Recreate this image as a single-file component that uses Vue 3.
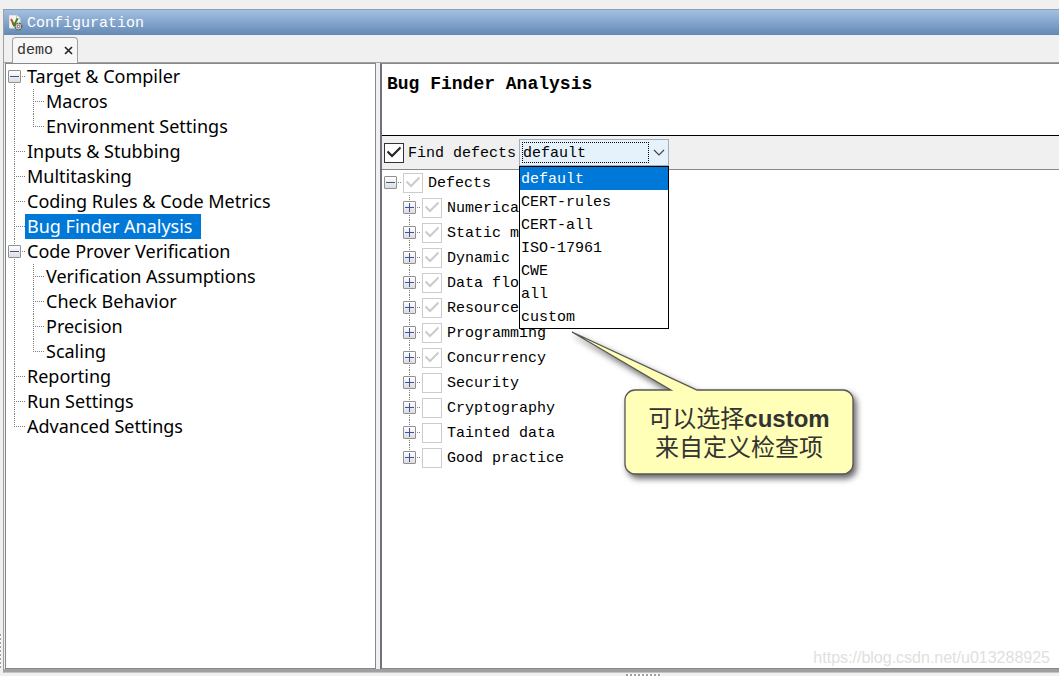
<script setup>
import { ref } from 'vue'

const sections = ref([
  { name: 'Target & Compiler', open: true, children: ['Macros', 'Environment Settings'] },
  { name: 'Inputs & Stubbing' },
  { name: 'Multitasking' },
  { name: 'Coding Rules & Code Metrics' },
  { name: 'Bug Finder Analysis' },
  {
    name: 'Code Prover Verification',
    open: true,
    children: ['Verification Assumptions', 'Check Behavior', 'Precision', 'Scaling'],
  },
  { name: 'Reporting' },
  { name: 'Run Settings' },
  { name: 'Advanced Settings' },
])
const current = ref('Bug Finder Analysis')

const defectsOpen = ref(true)
const defects = ref([
  { name: 'Numerical', on: true },
  { name: 'Static memory', on: true },
  { name: 'Dynamic memory', on: true },
  { name: 'Data flow', on: true },
  { name: 'Resource management', on: true },
  { name: 'Programming', on: true },
  { name: 'Concurrency', on: true },
  { name: 'Security', on: false },
  { name: 'Cryptography', on: false },
  { name: 'Tainted data', on: false },
  { name: 'Good practice', on: false },
])

const presets = ['default', 'CERT-rules', 'CERT-all', 'ISO-17961', 'CWE', 'all', 'custom']
const preset = ref('default')
const findDefects = ref(true)
</script>

<template>
  <div class="page">
    <span class="grip grip-left"></span>
    <span class="grip grip-bottom"></span>
    <div class="window">
      <header class="titlebar">
        <svg class="logo" width="14" height="16" viewBox="0 0 14 16" aria-hidden="true">
          <path d="M.5 .5h7.500l3 3v9.500H.5z" fill="#f7f5ee" stroke="#e4e1d8" />
          <path d="M7.500 .5v3h3.500" fill="#fff" stroke="#c3c3c3" />
          <path d="M2 4l2.500 5" stroke="#d5442c" stroke-width="2" fill="none" />
          <path d="M3.500 8L5 10.500 8.500 3.500" stroke="#3c8a2e" stroke-width="2" fill="none" />
          <circle cx="9.500" cy="11.500" r="3.300" fill="#d8d8d4" stroke="#66665f" stroke-width="1.500" stroke-dasharray="2 .6" />
          <circle cx="9.500" cy="11.500" r="1.200" fill="#fff" stroke="#66665f" />
        </svg>
        <span>Configuration</span>
      </header>

      <div class="tabs">
        <div class="tab">
          <span>demo</span>
          <button class="close" aria-label="Close demo">
            <svg width="9" height="9" viewBox="0 0 9 9" aria-hidden="true">
              <path d="M1 1l7 7M8 1L1 8" stroke="#222" stroke-width="1.600" />
            </svg>
          </button>
        </div>
      </div>

      <div class="panes">
        <nav class="pane nav">
          <ul class="tree root">
            <li v-for="s in sections" :key="s.name">
              <div class="row" :class="{ leaf: !s.children }">
                <button
                  v-if="s.children"
                  class="toggle"
                  :class="{ plus: !s.open }"
                  :aria-label="'Toggle ' + s.name"
                  @click="s.open = !s.open"
                ></button>
                <button class="item" :class="{ selected: current === s.name }" @click="current = s.name">{{ s.name }}</button>
              </div>
              <ul v-if="s.children && s.open" class="tree">
                <li v-for="c in s.children" :key="c">
                  <div class="row leaf">
                    <button class="item" :class="{ selected: current === c }" @click="current = c">{{ c }}</button>
                  </div>
                </li>
              </ul>
            </li>
          </ul>
        </nav>

        <main class="pane detail">
          <h1>Bug Finder Analysis</h1>
          <div class="toolbar">
            <label class="check">
              <input v-model="findDefects" type="checkbox" />
              <span>Find defects</span>
            </label>
            <div class="combo">
              <select v-model="preset" aria-label="Defect preset">
                <option v-for="p in presets" :key="p">{{ p }}</option>
              </select>
              <span class="focus"></span>
              <svg class="arrow" width="12" height="8" viewBox="0 0 12 8" aria-hidden="true">
                <path d="M1 1l5 5 5-5" fill="none" stroke="#444" stroke-width="1.200" />
              </svg>
              <ul class="menu" role="listbox" aria-label="Presets">
                <li
                  v-for="p in presets"
                  :key="p"
                  role="option"
                  :aria-selected="p === preset"
                  :class="{ selected: p === preset }"
                  @click="preset = p"
                >{{ p }}</li>
              </ul>
              <div class="callout">
                <svg width="300" height="160" viewBox="0 0 300 160" aria-hidden="true">
                  <path
                    d="M2 2L127 60H273a10 10 0 0 1 10 10v64a10 10 0 0 1-10 10H65a10 10 0 0 1-10-10V70a10 10 0 0 1 10-10H101z"
                    fill="#ffffb7"
                    stroke="#555"
                    stroke-width="1.300"
                  />
                </svg>
                <p>可以选择<b>custom</b><br />来自定义检查项</p>
              </div>
            </div>
          </div>

          <div class="defects">
            <ul class="tree single">
              <li>
                <div class="row">
                  <button class="toggle" :class="{ plus: !defectsOpen }" aria-label="Toggle Defects" @click="defectsOpen = !defectsOpen"></button>
                  <label class="check entry"><input type="checkbox" checked disabled /><span>Defects</span></label>
                </div>
                <ul v-if="defectsOpen" class="tree">
                  <li v-for="d in defects" :key="d.name">
                    <div class="row">
                      <button class="toggle plus" :aria-label="'Expand ' + d.name"></button>
                      <label class="check entry"><input v-model="d.on" type="checkbox" disabled /><span>{{ d.name }}</span></label>
                    </div>
                  </li>
                </ul>
              </li>
            </ul>
          </div>
          <a class="watermark" href="https://blog.csdn.net/u013288925">https://blog.csdn.net/u013288925</a>
        </main>
      </div>
    </div>
  </div>
</template>

<style>
body {
  margin: 0;
  background: #f0f0f0;
}
</style>

<style scoped>
* {
  box-sizing: border-box;
}
button {
  padding: 0;
  border: 0;
  background: none;
  font: inherit;
  color: inherit;
}
.page {
  position: relative;
  display: flex;
  min-height: 100vh;
  padding: 9px 0 3px 3px;
  overflow: hidden;
  background: #f0f0f0;
  color: #000;
  font: 15px/20px "Liberation Mono", "Noto Sans CJK SC", monospace;
}
.window {
  flex: 1;
  min-width: 0;
  display: flex;
  flex-direction: column;
  border-left: 1px solid #a0a0a0;
  border-bottom: 1px solid #c4c4c4;
}
.grip {
  position: absolute;
}
.grip-left {
  left: 0;
  bottom: 7px;
  width: 1px;
  height: 35px;
  background: repeating-linear-gradient(#a0a0a0 0 2px, #fff 2px 4px);
}
.grip-bottom {
  left: 626px;
  bottom: 0;
  width: 35px;
  height: 2px;
  background: repeating-linear-gradient(to right, #a0a0a0 0 2px, #fff 2px 4px);
}
.titlebar {
  display: flex;
  align-items: center;
  gap: 4px;
  height: 26px;
  padding: 2px 0 0 5px;
  border-top: 1px solid #8d9db2;
  background: linear-gradient(#a3c0e2, #6489b5);
  color: #fff;
}
.logo {
  margin-top: -2px;
}
.tabs {
  display: flex;
  height: 28px;
  padding: 2px 0 0 8px;
  border-bottom: 1px solid #a0a0a0;
}
.tab {
  display: flex;
  align-items: center;
  gap: 11px;
  height: 26px;
  padding: 1px 4px 0;
  border: 1px solid #a0a0a0;
  border-bottom: 0;
  border-radius: 4px 4px 0 0;
  background: #f7f7f7;
  color: #333;
}
.close {
  display: flex;
  padding-bottom: 2px;
}
.panes {
  flex: 1;
  display: grid;
  grid-template-columns: 371px minmax(0, 1fr);
  gap: 4px;
  padding-left: 1px;
  border-bottom: 3px solid #a0a0a0;
}
.pane {
  border: 1px solid #828790;
}
.nav {
  background: #fff;
  font: 18px/25px "Noto Sans", sans-serif;
}
.detail {
  position: relative;
  display: flex;
  flex-direction: column;
  border-left: 2px solid #70737a;
  border-right: 0;
  background: #fff;
}

.tree {
  margin: 0;
  padding: 0;
  list-style: none;
}
.tree li {
  background: repeating-linear-gradient(#808080 0 1px, transparent 1px 2px) 8px 0 / 1px 100% no-repeat;
}
.tree li:last-child {
  background-size: 1px 13px;
}
.tree.root > li:first-child {
  background-position: 8px 12px;
}
.tree.single > li {
  background: none;
}
.tree .tree {
  padding-left: 19px;
}
.row {
  display: flex;
  align-items: center;
  height: 25px;
  padding-left: 2px;
  background: repeating-linear-gradient(to right, #808080 0 1px, transparent 1px 2px) 16px 12px / 3px 1px no-repeat;
}
.row.leaf {
  padding-left: 19px;
  background-position: 8px 12px;
  background-size: 11px 1px;
}
.toggle {
  width: 13px;
  height: 13px;
  margin-right: 4px;
  border: 1px solid #919191;
  border-radius: 1px;
  background:
    linear-gradient(#3a55a0, #3a55a0) center / 9px 1px no-repeat,
    linear-gradient(#fff, #dcdcdc);
}
.toggle.plus {
  background:
    linear-gradient(#3a55a0, #3a55a0) center / 9px 1px no-repeat,
    linear-gradient(#3a55a0, #3a55a0) center / 1px 9px no-repeat,
    linear-gradient(#fff, #dcdcdc);
}
.item {
  height: 25px;
  padding: 0 5px 0 2px;
  white-space: nowrap;
}
.item.selected {
  padding-right: 9px;
  background: #0078d7;
  color: #fff;
}

h1 {
  height: 72px;
  margin: 0;
  padding: 10px 5px;
  border-bottom: 1px solid #000;
  font-size: 18px;
  line-height: 20px;
}
.toolbar {
  display: flex;
  align-items: center;
  gap: 3px;
  height: 34px;
  padding-left: 2px;
  border-bottom: 1px solid #828790;
  background: #f0f0f0;
}
.check {
  display: flex;
  align-items: center;
  gap: 4px;
  white-space: nowrap;
}
.check span {
  padding-top: 2px;
}
.entry {
  gap: 5px;
  padding-left: 2px;
}
.check input {
  appearance: none;
  display: block;
  width: 20px;
  height: 20px;
  margin: 0;
  border: 1px solid #333;
  background: #fff;
  color: #222;
}
.check input:disabled {
  border-color: #ccc;
  color: #ccc;
}
.check input:checked::before {
  content: "";
  display: block;
  width: 18px;
  height: 18px;
  background: currentColor;
  clip-path: polygon(2px 9px, 3px 7px, 7px 11px, 15px 3px, 16px 5px, 7px 14px);
}

.combo {
  position: relative;
  width: 150px;
  height: 27px;
}
.combo select {
  appearance: none;
  width: 100%;
  height: 100%;
  padding: 2px 22px 0 3px;
  border: 1px solid #a5adb8;
  border-radius: 0;
  outline: 0;
  background: #e5f1fb;
  color: #000;
  font: inherit;
}
.focus {
  position: absolute;
  inset: 3px 20px 3px 3px;
  border: 1px dotted #000;
  pointer-events: none;
}
.arrow {
  position: absolute;
  top: 10px;
  right: 4px;
  pointer-events: none;
}
.menu {
  position: absolute;
  z-index: 2;
  top: 100%;
  left: 0;
  width: 100%;
  margin: 0;
  padding: 0;
  border: 1px solid #000;
  background: #fff;
  list-style: none;
}
.menu li {
  height: 23px;
  padding: 1px;
  line-height: 23px;
}
.menu li.selected {
  background: #0078d7;
  color: #fff;
}
.callout {
  position: absolute;
  z-index: 3;
  top: 191px;
  left: 51px;
  width: 300px;
}
.callout svg {
  display: block;
  filter: drop-shadow(3px 4px 3px rgba(0, 0, 0, 0.6));
}
.callout p {
  position: absolute;
  top: 74px;
  left: 55px;
  width: 228px;
  margin: 0;
  color: #333;
  font: 24px/29px "Liberation Sans", "Noto Sans CJK SC", sans-serif;
  text-align: center;
  white-space: nowrap;
}
.defects {
  flex: 1;
}
.watermark {
  position: absolute;
  right: 9px;
  bottom: 0;
  color: #e0e0e0;
  font: 16px/20px "Liberation Sans", sans-serif;
  text-decoration: none;
}
</style>
